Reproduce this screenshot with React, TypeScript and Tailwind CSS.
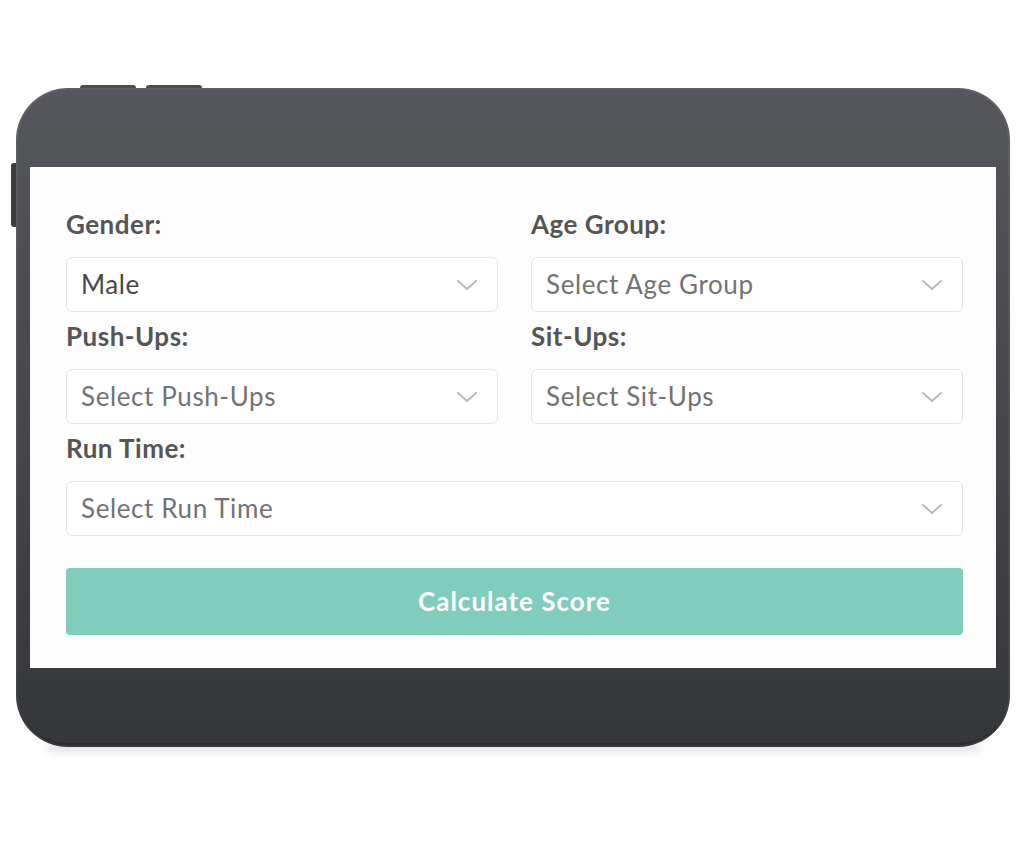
import React from 'react';

const font = { fontFamily: 'Lato, "Open Sans", sans-serif' };

// Small chevron used on the right of every select box
const Chevron = () => (
  <svg width="22" height="12" viewBox="0 0 22 12" fill="none" className="shrink-0">
    <path d="M2 2l9 8 9-8" stroke="#b9b9b9" strokeWidth="2" strokeLinecap="round" strokeLinejoin="round" />
  </svg>
);

interface FieldProps {
  label: string;
  value: string;
  placeholder?: boolean;
  className?: string;
}

const Field: React.FC<FieldProps> = ({ label, value, placeholder = true, className = '' }) => (
  <div className={`flex flex-col ${className}`}>
    <label className="h-[28px] leading-[28px] text-[26px] font-bold tracking-[0.5px] text-[#555555] mb-[19px]">{label}</label>
    <div className="h-[55px] flex items-center justify-between rounded-[6px] border border-[#e6e6e6] bg-white pl-[14px] pr-[19px]">
      <span className={`text-[26px] tracking-[0.6px] ${placeholder ? 'text-[#737373]' : 'text-[#484848]'}`}>{value}</span>
      <Chevron />
    </div>
  </div>
);

export default function App() {
  return (
    <div className="w-[1024px] h-[853px] bg-white relative overflow-hidden" style={font}>
      <div className="pt-[88px] pl-[16px]">
        <div className="relative w-[994px] h-[659px]">
          {/* hardware buttons */}
          <div className="absolute left-[64px] -top-[3px] w-[56px] h-[6px] rounded-t-[3px] bg-[#4b4c51]" />
          <div className="absolute left-[130px] -top-[3px] w-[56px] h-[6px] rounded-t-[3px] bg-[#4b4c51]" />
          <div className="absolute -left-[5px] top-[75px] w-[7px] h-[64px] rounded-l-[3px] bg-[#3c3d41]" />
          {/* soft floor shadow */}
          <div className="absolute left-[30px] right-[30px] -bottom-[5px] h-[9px] rounded-full bg-[#e2e2e2] blur-[4px]" />

          <div className="relative h-full rounded-[52px] bg-gradient-to-b from-[#56575c] via-[#46474b] to-[#353639] shadow-[inset_0_0_0_2px_rgba(255,255,255,0.06),inset_0_-4px_0_rgba(0,0,0,0.15)] pt-[79px] pb-[79px] pl-[14px] pr-[14px]">
            <div className="h-full bg-[#fdfdfd] pt-[43px] pl-[36px] pr-[33px] flex flex-col">
              <div className="grid grid-cols-2 gap-x-[33px] gap-y-[10px]">
                <Field label="Gender:" value="Male" placeholder={false} />
                <Field label="Age Group:" value="Select Age Group" />
                <Field label="Push-Ups:" value="Select Push-Ups" />
                <Field label="Sit-Ups:" value="Select Sit-Ups" />
                <Field label="Run Time:" value="Select Run Time" className="col-span-2" />
              </div>
              <button className="mt-[32px] h-[67px] w-full rounded-[4px] bg-[#80cdbd] text-white text-[26px] font-bold tracking-[1px]">
                Calculate Score
              </button>
            </div>
          </div>
        </div>
      </div>
    </div>
  );
}
